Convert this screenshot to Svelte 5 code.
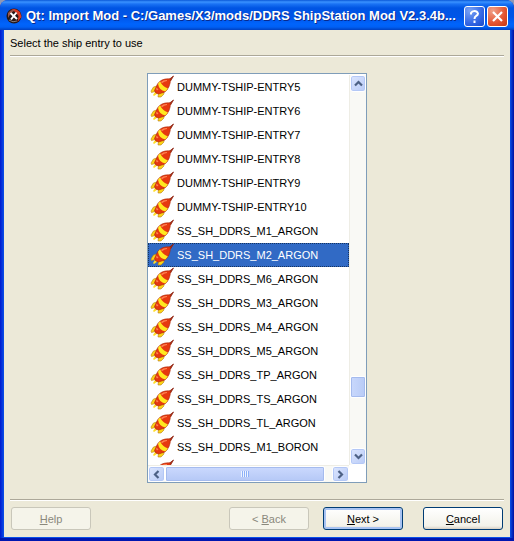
<script>
  const ships = [
    "DUMMY-TSHIP-ENTRY5",
    "DUMMY-TSHIP-ENTRY6",
    "DUMMY-TSHIP-ENTRY7",
    "DUMMY-TSHIP-ENTRY8",
    "DUMMY-TSHIP-ENTRY9",
    "DUMMY-TSHIP-ENTRY10",
    "SS_SH_DDRS_M1_ARGON",
    "SS_SH_DDRS_M2_ARGON",
    "SS_SH_DDRS_M6_ARGON",
    "SS_SH_DDRS_M3_ARGON",
    "SS_SH_DDRS_M4_ARGON",
    "SS_SH_DDRS_M5_ARGON",
    "SS_SH_DDRS_TP_ARGON",
    "SS_SH_DDRS_TS_ARGON",
    "SS_SH_DDRS_TL_ARGON",
    "SS_SH_DDRS_M1_BORON",
    ""
  ];

  let selected = $state(7);
</script>

{#snippet rocket()}
  <svg class="rocket" viewBox="0 0 24 24" aria-hidden="true">
    <path d="M7 11 3.500 12 1 16 1.500 17.500 7 16z" fill="#fbd514" stroke="#b87a18" stroke-width=".6" />
    <path d="M13.500 16 14 19 11 22 8 22 8.500 18z" fill="#fbd514" stroke="#b87a18" stroke-width=".6" />
    <path d="M5 17 3 20 4 21 7.500 18.500z" fill="#ffdc28" />
    <path d="M23.500 1 19 4.500 20.500 6z" fill="#b52c10" stroke="#8a200c" stroke-width=".8" />
    <path d="M20.500 4C15 3.200 10 5 7.500 9L4.500 15.500q.5 3 4 3.500L15 17c3.500-3 5.500-7.500 5.500-13z" fill="#e6380f" stroke="#a82c0c" stroke-width=".6" />
    <path d="M10 6.200 8 8.800q1 6.500 7.300 7.800l2.600-3.200Q12.500 11.500 10 6.200z" fill="#ffe820" />
    <path d="M17 5q-3.500-.3-6 2l1 1.200q2-1.800 5-2.200z" fill="#ff8050" />
    <path d="M6.500 12.500q-1 2 .5 3l1.500-1z" fill="#ff8050" />
  </svg>
{/snippet}

{#snippet arrow(path)}
  <svg viewBox="0 0 9 9" aria-hidden="true">
    <path d={path} fill="none" stroke="#4d6185" stroke-width="2.200" />
  </svg>
{/snippet}

<main>
  <header>
    <svg class="logo" viewBox="0 0 16 16" aria-hidden="true">
      <circle cx="8" cy="8" r="7.500" fill="#251818" />
      <path d="M5 2Q9-1 14 4l1.500 5-4 5 1-6-3-4z" fill="#d83a24" />
      <path d="M2 5q3-4 7-3L5 5 2 10z" fill="#9c5548" />
      <path d="m4.500 5 6.500 6M10.500 4.500 5 11.500" stroke="#fff" stroke-width="2" />
      <path d="M3 12q4 3 8 1" fill="none" stroke="#887c7c" />
    </svg>
    <h1>Qt: Import Mod - C:/Games/X3/mods/DDRS ShipStation Mod V2.3.4b...</h1>
    <button class="caption" aria-label="What's this?">
      <svg viewBox="0 0 19 19" aria-hidden="true">
        <path d="M6 7.500V6q1-2 3.500-2T13 6.500q0 1.500-2 2.500-1.500 1-1.500 3M9.500 13.500V16" fill="none" stroke="#fff" stroke-width="2" />
      </svg>
    </button>
    <button class="caption close" aria-label="Close">
      <svg viewBox="0 0 19 19" aria-hidden="true">
        <path d="m5 5 9 9m0-9-9 9" stroke="#fff" stroke-width="2.200" />
      </svg>
    </button>
  </header>

  <div class="content">
    <p>Select the ship entry to use</p>
    <hr />

    <section>
      <div class="list">
        <ul>
          {#each ships as ship, i}
            <li>
              <button
                class="item"
                class:selected={selected === i}
                aria-pressed={selected === i}
                aria-label={ship || "Next ship"}
                onclick={() => (selected = i)}
              >
                {@render rocket()}
                <span>{ship}</span>
              </button>
            </li>
          {/each}
        </ul>
        <div class="bar vertical">
          <button class="step" aria-label="Scroll up">{@render arrow("M1 6.500 4.500 3 8 6.500")}</button>
          <div class="track"><div class="thumb"></div></div>
          <button class="step" aria-label="Scroll down">{@render arrow("M1 2.500 4.500 6 8 2.500")}</button>
        </div>
        <div class="bar horizontal">
          <button class="step" aria-label="Scroll left">{@render arrow("M6.500 1 3 4.500 6.500 8")}</button>
          <div class="track"><div class="thumb"><i></i></div></div>
          <button class="step" aria-label="Scroll right">{@render arrow("M2.500 1 6 4.500 2.500 8")}</button>
        </div>
      </div>
    </section>

    <hr />
    <footer>
      <button class="push help" disabled><u>H</u>elp</button>
      <button class="push" disabled>&lt; <u>B</u>ack</button>
      <button class="push default"><u>N</u>ext &gt;</button>
      <button class="push cancel"><u>C</u>ancel</button>
    </footer>
  </div>
</main>

<style>
  :global(body) {
    background: #8f98b5;
  }

  * {
    box-sizing: border-box;
  }

  main {
    display: flex;
    flex-direction: column;
    min-height: 100vh;
    padding: 0 4px 4px;
    border-radius: 8px 8px 0 0;
    background: linear-gradient(90deg, #0019cf, #0a50e8 4px, #0a50e8 calc(100% - 4px), #0010a0);
    box-shadow: inset 0 -3px #0016b0;
    font-family: "Liberation Sans", Arial, sans-serif;
    font-size: 11px;
    color: #000;
    overflow: hidden;
  }

  button {
    font: inherit;
    padding: 0;
    color: inherit;
  }

  header {
    display: flex;
    align-items: center;
    gap: 2px;
    height: 30px;
    margin: 0 -4px;
    padding: 2px 6px 0;
    background: linear-gradient(#0a58d8 0, #3a92ff 2px, #1a72f4 4px, #0054e3 8px, #0055e8 17px, #0064fc 24px, #0060f5 27px, #0040c0 30px);
  }

  .logo {
    width: 16px;
    height: 16px;
    flex: none;
  }

  h1 {
    flex: 1;
    min-width: 0;
    margin: 0 0 0 2px;
    overflow: hidden;
    white-space: nowrap;
    font-size: 13px;
    line-height: 20px;
    color: #fff;
    text-shadow: 1px 1px #0a2a8c;
  }

  .caption {
    flex: none;
    width: 21px;
    height: 21px;
    border: 1px solid #fff;
    border-radius: 3px;
    background: radial-gradient(circle at 25% 20%, #7ba3f4, #3467e4 60%, #1848c8);
  }

  .caption svg {
    display: block;
    width: 19px;
    height: 19px;
  }

  .close {
    background: radial-gradient(circle at 25% 20%, #f0a088, #e4532f 60%, #c33812);
  }

  .content {
    flex: 1;
    display: flex;
    flex-direction: column;
    padding: 0 6px;
    background: #ece9d8;
  }

  p {
    margin: 0;
    padding: 6px 0 5px;
    line-height: 14px;
  }

  hr {
    width: 100%;
    margin: 0;
    border: 0;
    border-top: 1px solid #aca899;
    border-bottom: 1px solid #fff;
  }

  section {
    flex: 1;
    padding: 16px 0;
  }

  .list {
    display: grid;
    grid-template-columns: 1fr 17px;
    grid-template-rows: 390px 17px;
    width: 220px;
    margin: 0 auto;
    padding-top: 1px;
    border: 1px solid #7f9db9;
    background: #fff;
  }

  ul {
    margin: 0;
    padding: 0;
    overflow: hidden;
    list-style: none;
  }

  .item {
    display: flex;
    align-items: center;
    gap: 3px;
    width: 100%;
    height: 24px;
    padding: 0 1px;
    border: 1px solid transparent;
    background: none;
    text-align: left;
  }

  .item.selected {
    border: 1px dotted #16345f;
    background: #316ac5;
    color: #fff;
  }

  .rocket {
    width: 24px;
    height: 24px;
    flex: none;
  }

  .bar {
    display: flex;
    background: #f9f9f5;
  }

  .vertical {
    flex-direction: column;
    border-left: 1px solid #eeede5;
  }

  .horizontal {
    border-top: 1px solid #eeede5;
  }

  .track {
    flex: 1;
    display: flex;
    flex-direction: inherit;
  }

  .track::before,
  .track::after {
    content: "";
  }

  .vertical .track::before {
    flex: 57;
  }

  .vertical .track::after {
    flex: 10;
  }

  .horizontal .track::after {
    width: 7px;
  }

  .step {
    flex: none;
    display: grid;
    place-items: center;
    width: 16px;
    height: 17px;
    border: 1px solid #fff;
    border-radius: 3px;
    background: linear-gradient(135deg, #dce6ff, #b9cbf6);
    box-shadow: inset 0 0 0 1px #b4c8f6;
  }

  .step svg {
    width: 9px;
    height: 9px;
  }

  .horizontal .step {
    width: 17px;
    height: 16px;
  }

  .thumb {
    display: grid;
    place-items: center;
    border: 1px solid #fff;
    border-radius: 2px;
    background: linear-gradient(90deg, #c9d8fc, #b8cbf6);
    box-shadow: inset 0 0 0 1px #a5bbee;
  }

  .vertical .thumb {
    height: 22px;
  }

  .horizontal .thumb {
    flex: 1;
    background: linear-gradient(#cbd9fe, #b5c8f6);
  }

  .thumb i {
    width: 8px;
    height: 6px;
    background: repeating-linear-gradient(90deg, #eef4fe 0 1px, #8cb0f8 1px 2px);
  }

  footer {
    display: flex;
    padding: 6px 1px 7px;
  }

  .push {
    width: 80px;
    height: 23px;
    border: 1px solid #003c74;
    border-radius: 3px;
    background: linear-gradient(#fff, #f3f2ea 85%, #d8d0c4);
  }

  .push:disabled {
    border-color: #c9c7ba;
    background: #f5f4ea;
    color: #8a887c;
  }

  .help {
    margin-right: auto;
  }

  .default {
    margin-left: 14px;
    box-shadow: inset 0 0 0 2px #a8c3f2;
  }

  .cancel {
    margin-left: 20px;
  }
</style>
